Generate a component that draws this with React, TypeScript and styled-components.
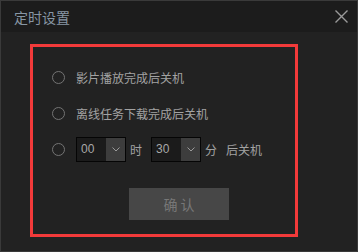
import React, { useState } from "react";
import styled, { createGlobalStyle } from "styled-components";

const GlobalStyle = createGlobalStyle`
  html, body {
    margin: 0;
    padding: 0;
    background: #1e1e1e;
  }
  * {
    box-sizing: border-box;
  }
`;

const font = `"Noto Sans CJK SC", "Liberation Sans", sans-serif`;

const SWindow = styled.div`
  width: 358px;
  height: 252px;
  border: 1px solid #3a3a3a;
  background: #222222;
  display: flex;
  flex-direction: column;
  font-family: ${font};
`;

const STitleBar = styled.div`
  height: 31px;
  flex-shrink: 0;
  background: #1c1c1c;
  display: flex;
  align-items: center;
  justify-content: space-between;
  padding: 0 9px 0 13px;
`;

const STitle = styled.span`
  font-size: 14px;
  color: #8796a4;
`;

const SClose = styled.button`
  width: 14px;
  height: 14px;
  padding: 0;
  border: none;
  background: transparent;
  display: flex;
  align-items: center;
  justify-content: center;
  cursor: pointer;
`;

const SBody = styled.div`
  flex: 1;
  padding: 12px 0 0 29px;
`;

const SHighlight = styled.div`
  width: 268px;
  height: 193px;
  border: 3px solid #f23a3a;
  padding: 12px 0 0 19px;
  display: flex;
  flex-direction: column;
`;

const SRow = styled.label`
  height: 36px;
  display: flex;
  align-items: center;
  gap: 11px;
  font-size: 12px;
  color: #a2a2a2;
  cursor: pointer;
`;

const SRadio = styled.span<{ $checked: boolean }>`
  width: 13px;
  height: 13px;
  border-radius: 50%;
  border: 1.5px solid #747474;
  flex-shrink: 0;
  display: flex;
  align-items: center;
  justify-content: center;

  &::after {
    content: "";
    width: 5px;
    height: 5px;
    border-radius: 50%;
    background: ${({ $checked }) => ($checked ? "#a2a2a2" : "transparent")};
  }
`;

const STimeGroup = styled.div`
  display: flex;
  align-items: center;
  gap: 4px;
`;

const SUnit = styled.span`
  margin-right: 5px;
  font-size: 12px;
  color: #a2a2a2;
`;

const SSelect = styled.div`
  width: 50px;
  height: 25px;
  border: 1px solid #050505;
  display: flex;
  background: #1b1b1b;
`;

const SSelectValue = styled.span`
  flex: 1;
  padding-left: 4px;
  display: flex;
  align-items: center;
  font-size: 12px;
  color: #a8a8a8;
  font-family: "Liberation Sans", sans-serif;
`;

const SSelectArrow = styled.span`
  width: 19px;
  background: #3d3d3d;
  display: flex;
  align-items: center;
  justify-content: center;
`;

const SConfirm = styled.button`
  margin-top: 21px;
  margin-left: 77px;
  width: 100px;
  height: 32px;
  border: none;
  background: #474747;
  color: #777777;
  font-size: 14px;
  font-family: ${font};
  padding: 0;
  cursor: default;
`;

const Chevron = () => (
  <svg width="8" height="5" viewBox="0 0 8 5">
    <path d="M0.5 0.5 L4 4 L7.5 0.5" fill="none" stroke="#9a9a9a" strokeWidth="1" />
  </svg>
);

const TimeSelect = ({ value }: { value: string }) => (
  <SSelect>
    <SSelectValue>{value}</SSelectValue>
    <SSelectArrow>
      <Chevron />
    </SSelectArrow>
  </SSelect>
);

export default function App() {
  const [mode, setMode] = useState<number>(-1);

  return (
    <>
      <GlobalStyle />
      <SWindow>
        <STitleBar>
          <STitle>定时设置</STitle>
          <SClose aria-label="close">
            <svg width="13" height="13" viewBox="0 0 13 13">
              <path d="M0.5 0.5 L12.5 12.5 M12.5 0.5 L0.5 12.5" stroke="#9a9a9a" strokeWidth="1.4" />
            </svg>
          </SClose>
        </STitleBar>
        <SBody>
          <SHighlight>
            <SRow onClick={() => setMode(0)}>
              <SRadio $checked={mode === 0} />
              影片播放完成后关机
            </SRow>
            <SRow onClick={() => setMode(1)}>
              <SRadio $checked={mode === 1} />
              离线任务下载完成后关机
            </SRow>
            <SRow onClick={() => setMode(2)}>
              <SRadio $checked={mode === 2} />
              <STimeGroup>
                <TimeSelect value="00" />
                <SUnit>时</SUnit>
                <TimeSelect value="30" />
                <SUnit>分</SUnit>
                <SUnit>后关机</SUnit>
              </STimeGroup>
            </SRow>
            <SConfirm>确 认</SConfirm>
          </SHighlight>
        </SBody>
      </SWindow>
    </>
  );
}
